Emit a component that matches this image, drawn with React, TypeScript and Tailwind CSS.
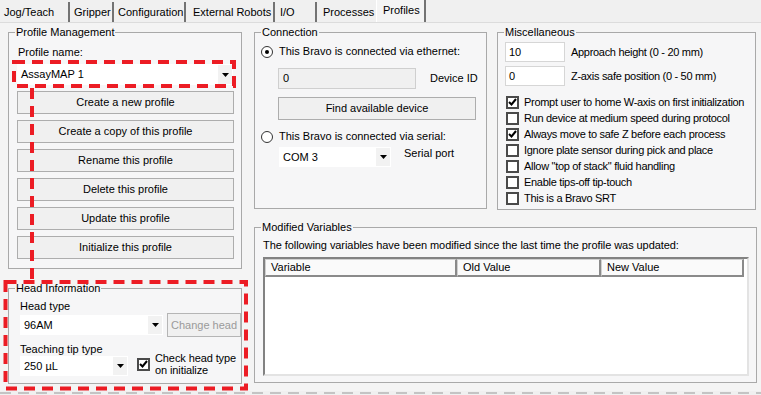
import React from "react";

function Arrow() {
  return (
    <svg width="7" height="4" viewBox="0 0 7 4">
      <polygon points="0,0 7,0 3.5,4" fill="#000" />
    </svg>
  );
}

function Combo({ value, className }: { value: string; className: string }) {
  return (
    <div className={`flex items-center bg-white ${className}`}>
      <span className="flex-1 pl-[4px] whitespace-nowrap">{value}</span>
      <span className="w-[14px] mr-[1px] self-stretch my-[1px] flex items-center justify-center bg-[#f2f2f2]">
        <Arrow />
      </span>
    </div>
  );
}

function Check({ checked }: { checked?: boolean }) {
  return (
    <span className="w-[13px] h-[13px] border-2 border-[#4a4a4a] bg-white flex items-center justify-center shrink-0">
      {checked && (
        <svg width="9" height="8" viewBox="0 0 9 8">
          <polyline points="1,4 3.5,6.5 8,1" fill="none" stroke="#000" strokeWidth="2" />
        </svg>
      )}
    </span>
  );
}

function Radio({ checked }: { checked?: boolean }) {
  return (
    <span className="w-[12px] h-[12px] rounded-full border border-[#333] bg-white flex items-center justify-center shrink-0">
      {checked && <span className="w-[4px] h-[4px] rounded-full bg-black" />}
    </span>
  );
}

function Group({ title, className, children }: { title: string; className: string; children?: React.ReactNode }) {
  return (
    <fieldset className={`border border-[#a9a9a9] bg-[#f6f6f7] min-w-0 ${className}`}>
      <legend className="ml-[6px] px-[1px] leading-[14px]">{title}</legend>
      {children}
    </fieldset>
  );
}

function Btn({ label }: { label: string }) {
  return (
    <div className="w-[217px] h-[23px] border border-[#adadad] bg-[#f0f0f0] flex items-center justify-center">
      {label}
    </div>
  );
}

const misc = [
  { label: "Prompt user to home W-axis on first initialization", checked: true },
  { label: "Run device at medium speed during protocol", checked: false },
  { label: "Always move to safe Z before each process", checked: true },
  { label: "Ignore plate sensor during pick and place", checked: false },
  { label: "Allow \"top of stack\" fluid handling", checked: false },
  { label: "Enable tips-off tip-touch", checked: false },
  { label: "This is a Bravo SRT", checked: false },
];

export default function App() {
  return (
    <div className="w-[761px] h-[395px] bg-[#f0f0f0] flex flex-col overflow-hidden relative text-[11px] leading-[13px] text-black font-['Liberation_Sans',Arial,sans-serif]">
      {/* Tabs */}
      <div className="h-[22px] flex items-end shrink-0 whitespace-nowrap">
        <div className="w-[70px] h-[20px] pl-[4px] flex items-center border-r-2 border-[#737373]">Jog/Teach</div>
        <div className="w-[44px] h-[20px] pl-[4px] flex items-center border-r-2 border-[#737373]">Gripper</div>
        <div className="w-[72px] h-[20px] pl-[4px] flex items-center border-r-2 border-[#737373]">Configuration</div>
        <div className="w-[89px] h-[20px] pl-[7px] flex items-center border-r-2 border-[#737373]">External Robots</div>
        <div className="w-[42px] h-[20px] pl-[5px] flex items-center border-r-2 border-[#737373]">I/O</div>
        <div className="w-[59px] h-[20px] pl-[6px] flex items-center">Processes</div>
        <div className="w-[50px] h-[22px] pl-[6px] pb-[2px] flex items-center border-l border-white border-r-2 border-r-[#737373] bg-[#f4f4f4]">Profiles</div>
      </div>

      {/* Panel */}
      <div className="h-[369px] border-t border-[#dcdcdc] bg-[#f4f4f4] flex pl-[8px] pt-[2px]">
        {/* Left column */}
        <div className="w-[234px] flex flex-col">
          <Group title="Profile Management" className="w-[234px] h-[244px]">
            <div className="mt-[7px] ml-[9px]">Profile name:</div>
            <Combo value="AssayMAP 1" className="mt-[5px] ml-[8px] w-[216px] h-[21px]" />
            <div className="mt-[6px] ml-[8px] flex flex-col gap-[6px]">
              <Btn label="Create a new profile" />
              <Btn label="Create a copy of this profile" />
              <Btn label="Rename this profile" />
              <Btn label="Delete this profile" />
              <Btn label="Update this profile" />
              <Btn label="Initialize this profile" />
            </div>
          </Group>
          <Group title="Head Information" className="mt-[12px] w-[234px] h-[103px]">
            <div className="mt-[5px] ml-[11px]">Head type</div>
            <div className="ml-[11px] h-[24px] flex items-center">
              <Combo value="96AM" className="w-[143px] h-[20px]" />
              <div className="ml-[4px] w-[74px] h-[24px] border border-[#b5b5b5] bg-[#f0f0f0] text-[#9a9a9a] flex items-center justify-center whitespace-nowrap">
                Change head
              </div>
            </div>
            <div className="mt-[6px] ml-[11px] flex items-end">
              <div className="flex flex-col">
                <div>Teaching tip type</div>
                <Combo value="250 µL" className="w-[108px] h-[20px]" />
              </div>
              <div className="ml-[9px] flex items-center">
                <Check checked />
                <div className="ml-[5px] leading-[12px] tracking-[-0.1px]">
                  <div>Check head type</div>
                  <div>on initialize</div>
                </div>
              </div>
            </div>
          </Group>
        </div>

        {/* Right column */}
        <div className="ml-[12px] w-[503px] flex flex-col">
          <div className="flex items-start">
            <Group title="Connection" className="w-[233px] h-[184px]">
              <div className="mt-[6px] ml-[6px] h-[13px] flex items-center">
                <Radio checked />
                <span className="ml-[6px]">This Bravo is connected via ethernet:</span>
              </div>
              <div className="mt-[10px] ml-[23px] flex items-center">
                <div className="w-[138px] h-[21px] border border-[#cfcfcf] bg-[#f0f0f0] pl-[4px] flex items-center">0</div>
                <span className="ml-[14px]">Device ID</span>
              </div>
              <div className="mt-[8px] ml-[23px] w-[198px] h-[23px] border border-[#adadad] bg-[#f0f0f0] flex items-center justify-center">
                Find available device
              </div>
              <div className="mt-[10px] ml-[6px] h-[13px] flex items-center">
                <Radio />
                <span className="ml-[6px]">This Bravo is connected via serial:</span>
              </div>
              <div className="mt-[4px] ml-[24px] flex items-start">
                <Combo value="COM 3" className="w-[112px] h-[20px]" />
                <span className="ml-[13px]">Serial port</span>
              </div>
            </Group>
            <Group title="Miscellaneous" className="ml-[10px] w-[259px] h-[185px]">
              <div className="mt-[3px] ml-[7px] flex items-center">
                <div className="w-[60px] h-[20px] border border-[#d6d6d6] bg-white pl-[3px] flex items-center">10</div>
                <span className="ml-[6px] tracking-[-0.3px]">Approach height (0 - 20 mm)</span>
              </div>
              <div className="mt-[4px] ml-[7px] flex items-center">
                <div className="w-[60px] h-[20px] border border-[#d6d6d6] bg-white pl-[3px] flex items-center">0</div>
                <span className="ml-[6px] tracking-[-0.3px]">Z-axis safe position (0 - 50 mm)</span>
              </div>
              <div className="mt-[8px] ml-[8px] flex flex-col">
                {misc.map((m) => (
                  <div key={m.label} className="h-[16px] flex items-center">
                    <Check checked={m.checked} />
                    <span className="ml-[5px] whitespace-nowrap tracking-[-0.3px]">{m.label}</span>
                  </div>
                ))}
              </div>
            </Group>
          </div>
          <Group title="Modified Variables" className="mt-[10px] w-[503px] h-[163px]">
            <div className="mt-[5px] ml-[8px] tracking-[-0.07px] whitespace-nowrap">
              The following variables have been modified since the last time the profile was updated:
            </div>
            <div className="mt-[5px] ml-[8px] w-[486px] h-[119px] border-2 border-t-[#828282] border-l-[#828282] border-r-[#e3e3e3] border-b-[#e3e3e3] bg-white">
              <div className="h-[18px] flex">
                <div className="w-[192px] pl-[5px] flex items-center bg-[#fafafa] border-t border-l border-r-2 border-b-2 border-t-[#d0d0d0] border-l-[#d0d0d0] border-r-[#8a8a8a] border-b-[#8a8a8a]">Variable</div>
                <div className="w-[144px] pl-[5px] flex items-center bg-[#fafafa] border-t border-l border-r-2 border-b-2 border-t-[#d0d0d0] border-l-[#d0d0d0] border-r-[#8a8a8a] border-b-[#8a8a8a]">Old Value</div>
                <div className="w-[143px] pl-[5px] flex items-center bg-[#fafafa] border-t border-l border-r-2 border-b-2 border-t-[#d0d0d0] border-l-[#d0d0d0] border-r-[#8a8a8a] border-b-[#8a8a8a]">New Value</div>
              </div>
            </div>
          </Group>
        </div>
      </div>

      {/* bottom dashed edge */}
      <svg width="761" height="4" className="shrink-0">
        <line x1="0" y1="2" x2="761" y2="2" stroke="#c4c4c4" strokeWidth="2" strokeDasharray="11 7" />
      </svg>

      {/* red annotation overlay */}
      <svg width="761" height="395" className="absolute left-0 top-0 pointer-events-none">
        <g fill="none" stroke="#ec1c24" strokeWidth="4" strokeDasharray="11 7">
          <rect x="14" y="62" width="220" height="24" />
          <line x1="32" y1="88" x2="32" y2="280" />
          <rect x="5.5" y="282" width="240.5" height="106.5" />
        </g>
      </svg>
    </div>
  );
}
